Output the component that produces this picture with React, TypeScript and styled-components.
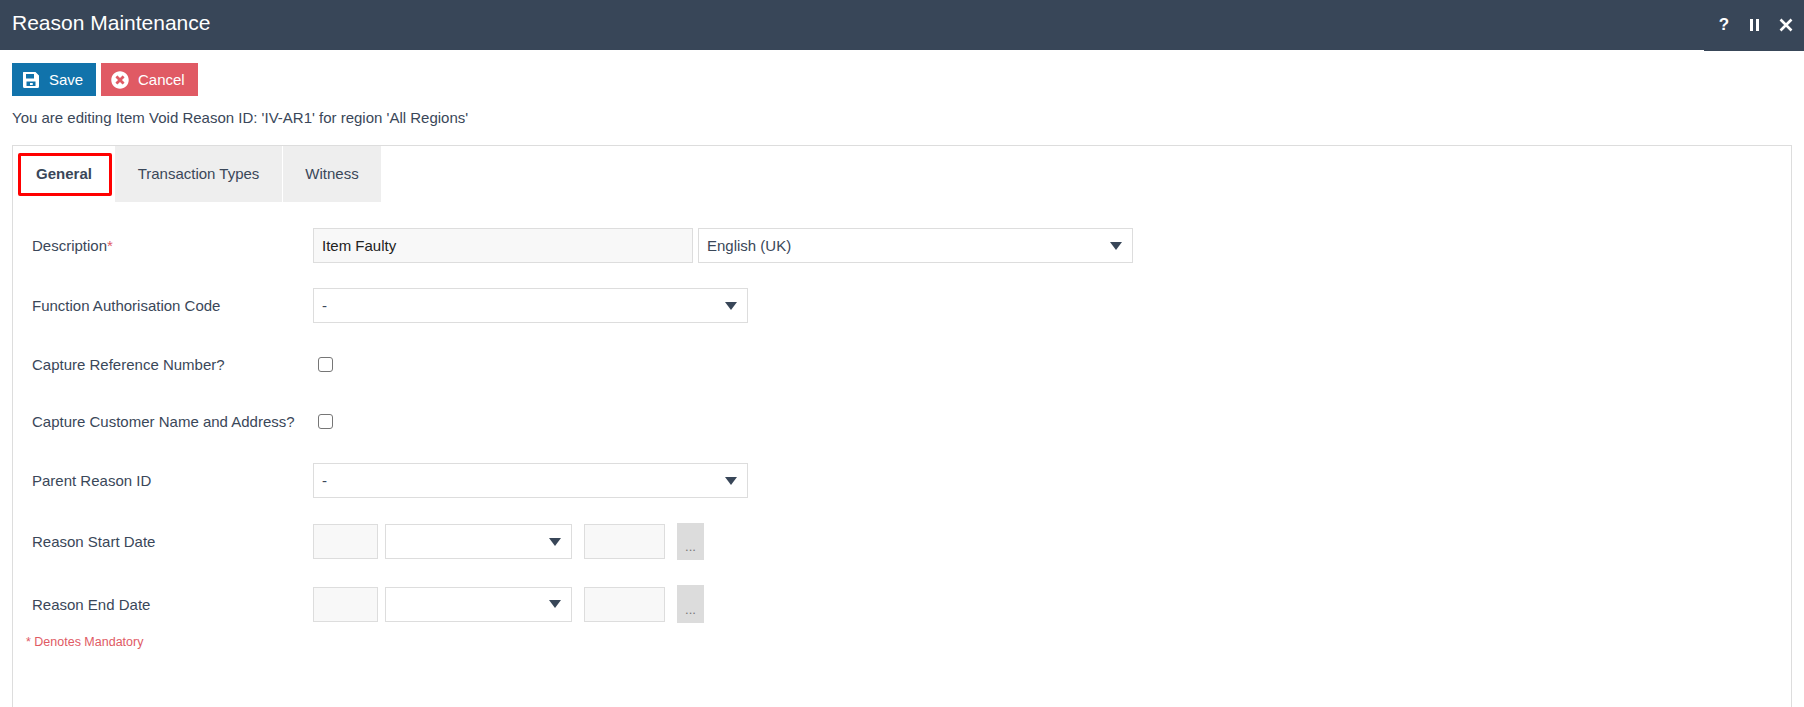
import styled, { createGlobalStyle } from 'styled-components';
import { FaTimesCircle } from 'react-icons/fa';

const GlobalStyle = createGlobalStyle`
  html, body {
    margin: 0;
    padding: 0;
    background: #ffffff;
    overflow: hidden;
  }
  body {
    font-family: "Liberation Sans", Arial, sans-serif;
    color: #3a4759;
  }
`;

const Page = styled.div`
  width: 1804px;
  height: 707px;
  display: flex;
  flex-direction: column;
  overflow: hidden;
`;

const Header = styled.header`
  height: 50px;
  flex: none;
  display: flex;
  justify-content: space-between;
  align-items: flex-start;
  background: #384658;
`;

const Title = styled.h1`
  margin: 0 0 0 12px;
  font-size: 21px;
  font-weight: 400;
  line-height: 46px;
  color: #ffffff;
`;

const HeaderControls = styled.div`
  width: 100px;
  height: 51px;
  display: flex;
  align-items: center;
  justify-content: flex-end;
  gap: 19px;
  padding: 0 11px 2px 0;
  box-sizing: border-box;
  background: #384658;
  color: #ffffff;
`;

const HelpMark = styled.span`
  font-size: 17px;
  font-weight: 700;
  width: 12px;
  text-align: center;
`;

const Toolbar = styled.div`
  display: flex;
  gap: 5px;
  padding: 13px 12px 0;
`;

const ActionButton = styled.button<{ $bg: string; $width: number }>`
  width: ${(p) => p.$width}px;
  height: 33px;
  display: flex;
  align-items: center;
  gap: 9px;
  padding: 0 0 0 10px;
  border: none;
  background: ${(p) => p.$bg};
  color: #ffffff;
  font-family: inherit;
  font-size: 15px;
  svg {
    width: 18px;
    height: 18px;
    flex: none;
  }
`;

const Message = styled.p`
  margin: 0;
  padding: 0 12px;
  font-size: 15px;
  line-height: 16px;
  height: 16px;
  margin-top: 14px;
`;

const Panel = styled.section`
  flex: 1;
  margin: 19px 12px 0 12px;
  border: 1px solid #dddddd;
  border-bottom: none;
`;

const TabList = styled.div`
  display: flex;
  height: 56px;
  gap: 1px;
`;

const Tab = styled.div<{ $active?: boolean; $width: number }>`
  box-sizing: border-box;
  width: ${(p) => p.$width}px;
  padding-bottom: 2px;
  display: flex;
  align-items: center;
  justify-content: center;
  font-size: 15px;
  background: ${(p) => (p.$active ? '#ffffff' : '#eeeeee')};
  font-weight: ${(p) => (p.$active ? 700 : 400)};
  ${(p) =>
    p.$active &&
    `
    height: 43px;
    margin: 7px 2px 0 5px;
    padding: 0 2px 2px 0;
    border: 3px solid #ff0000;
    border-radius: 2px;
  `}
`;

const Form = styled.form`
  padding: 26px 0 0 19px;
`;

const Row = styled.div<{ $height?: number; $after?: number }>`
  display: flex;
  align-items: center;
  height: ${(p) => p.$height ?? 35}px;
  margin-bottom: ${(p) => p.$after ?? 25}px;
`;

const Label = styled.label`
  width: 281px;
  flex: none;
  font-size: 15px;
`;

const Required = styled.span`
  color: #e05a64;
`;

const TextInput = styled.div<{ $width: number; $gap?: number }>`
  box-sizing: border-box;
  width: ${(p) => p.$width}px;
  height: 35px;
  margin-right: ${(p) => p.$gap ?? 0}px;
  padding: 0 8px;
  display: flex;
  align-items: center;
  border: 1px solid #dddddd;
  background: #f8f8f8;
  color: #222222;
  font-size: 15px;
`;

const Select = styled.div<{ $width: number; $gap?: number }>`
  box-sizing: border-box;
  width: ${(p) => p.$width}px;
  height: 35px;
  margin-right: ${(p) => p.$gap ?? 0}px;
  padding: 0 9px 0 8px;
  display: flex;
  align-items: center;
  justify-content: space-between;
  border: 1px solid #dddddd;
  background: #ffffff;
  font-size: 15px;
`;

const Caret = styled.span`
  width: 0;
  height: 0;
  margin-right: 1px;
  border-left: 6px solid transparent;
  border-right: 6px solid transparent;
  border-top: 8px solid #384658;
`;

const Checkbox = styled.span`
  box-sizing: border-box;
  width: 15px;
  height: 15px;
  margin-left: 5px;
  border: 1px solid #767676;
  border-radius: 3px;
  background: #ffffff;
`;

const DatePicker = styled.button`
  width: 27px;
  align-self: stretch;
  padding: 10px 0 0;
  border: none;
  background: #dcdcdc;
  color: #777777;
  font-family: inherit;
  font-size: 13px;
`;

const Mandatory = styled.div`
  margin: -13px 0 0 -6px;
  font-size: 12.5px;
  line-height: 14px;
  color: #e05a64;
`;

function SelectField({ value, width, gap }: { value?: string; width: number; gap?: number }) {
  return (
    <Select $width={width} $gap={gap}>
      <span>{value}</span>
      <Caret />
    </Select>
  );
}

function DateFields() {
  return (
    <>
      <TextInput $width={65} $gap={7} />
      <SelectField width={187} gap={12} />
      <TextInput $width={81} $gap={12} />
      <DatePicker type="button">...</DatePicker>
    </>
  );
}

function SaveIcon() {
  return (
    <svg viewBox="0 0 18 18" fill="#ffffff">
      <path
        fillRule="evenodd"
        d="M1.5 1H13.5L17 4.5V15.5A1.5 1.5 0 0 1 15.5 17H2.5A1.5 1.5 0 0 1 1 15.5V1.5A.5.5 0 0 1 1.5 1ZM4 3V7.5H12V3ZM4.5 10.5V15H13.5V10.5ZM8 12H10.5V14H8Z"
      />
      <rect x="8" y="12" width="2.5" height="2" />
    </svg>
  );
}

export default function App() {
  return (
    <Page>
      <GlobalStyle />
      <Header>
        <Title>Reason Maintenance</Title>
        <HeaderControls>
          <HelpMark>?</HelpMark>
          <svg width="11" height="12" viewBox="0 0 11 12" fill="#ffffff">
            <rect x="1" y="0" width="3" height="12" />
            <rect x="7" y="0" width="3" height="12" />
          </svg>
          <svg width="14" height="14" viewBox="0 0 14 14" stroke="#ffffff" strokeWidth="2.6">
            <path d="M1.5 1.5 12.5 12.5M12.5 1.5 1.5 12.5" />
          </svg>
        </HeaderControls>
      </Header>

      <Toolbar>
        <ActionButton $bg="#1173ab" $width={84} type="button">
          <SaveIcon />
          Save
        </ActionButton>
        <ActionButton $bg="#e05a64" $width={97} type="button">
          <FaTimesCircle />
          Cancel
        </ActionButton>
      </Toolbar>
      <Message>You are editing Item Void Reason ID: 'IV-AR1' for region 'All Regions'</Message>

      <Panel>
        <TabList>
          <Tab $active $width={94}>General</Tab>
          <Tab $width={167}>Transaction Types</Tab>
          <Tab $width={98}>Witness</Tab>
        </TabList>
        <Form>
          <Row>
            <Label>
              Description<Required>*</Required>
            </Label>
            <TextInput $width={380} $gap={5}>Item Faulty</TextInput>
            <SelectField value="English (UK)" width={435} />
          </Row>
          <Row $after={24}>
            <Label>Function Authorisation Code</Label>
            <SelectField value="-" width={435} />
          </Row>
          <Row $after={22}>
            <Label>Capture Reference Number?</Label>
            <Checkbox />
          </Row>
          <Row $after={24}>
            <Label>Capture Customer Name and Address?</Label>
            <Checkbox />
          </Row>
          <Row>
            <Label>Parent Reason ID</Label>
            <SelectField value="-" width={435} />
          </Row>
          <Row $height={37}>
            <Label>Reason Start Date</Label>
            <DateFields />
          </Row>
          <Row $height={38}>
            <Label>Reason End Date</Label>
            <DateFields />
          </Row>
          <Mandatory>* Denotes Mandatory</Mandatory>
        </Form>
      </Panel>
    </Page>
  );
}
